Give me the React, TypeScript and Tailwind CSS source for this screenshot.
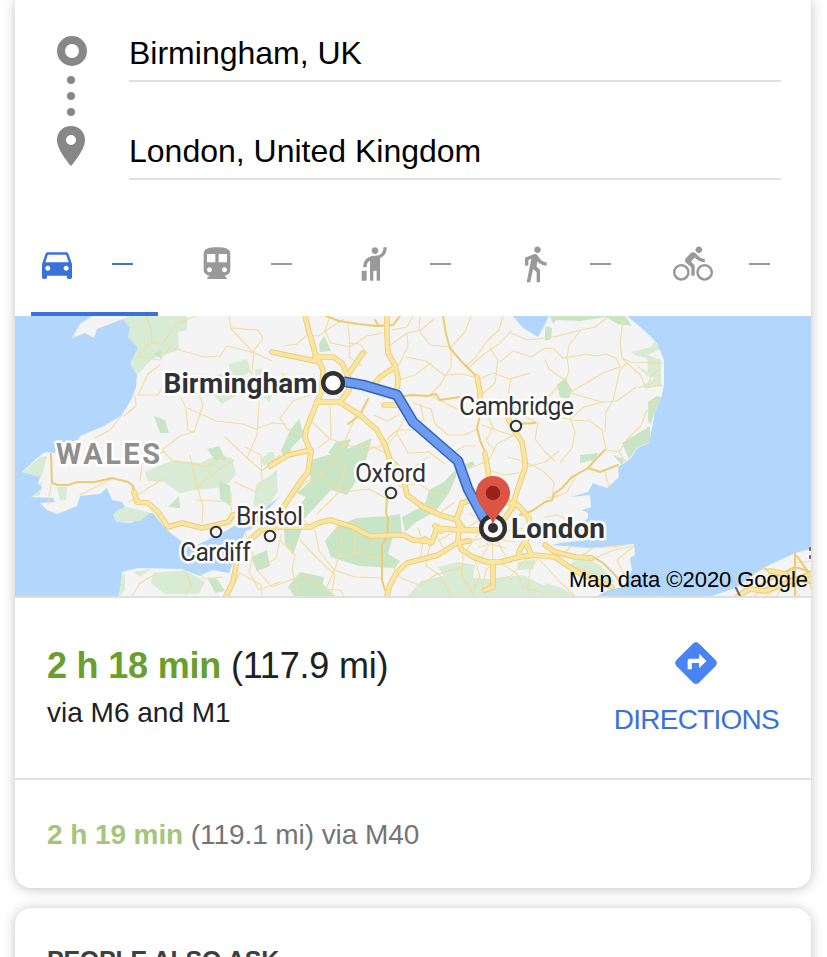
import React from "react";
import {
  MdDirections,
  MdDirectionsBike,
  MdDirectionsCar,
  MdDirectionsSubway,
  MdDirectionsWalk,
  MdHail,
} from "react-icons/md";

const modes = [
  { name: "Drive", Icon: MdDirectionsCar, shift: "" },
  { name: "Transit", Icon: MdDirectionsSubway, shift: "ml-[1px]" },
  { name: "Ride", Icon: MdHail, shift: "" },
  { name: "Walk", Icon: MdDirectionsWalk, shift: "" },
  { name: "Cycle", Icon: MdDirectionsBike, shift: "-ml-[1px]" },
];

// Map geometry, in the map's own coordinate space.
const water = [
  "M15 316H92L89 318L80 324L72 338L85 333L94 338L97 329L123 319L130 328L128 337L138 348L130 364L137 375L136 387L132 398L122 415L104 426L80 436L78 440L58 444L55 453L45 452L37 458L22 472L40 477L38 483L42 488L31 497L53 498L55 502L40 503L47 510L57 514L77 506L80 496L100 494L107 488L112 500L122 502L125 507L113 515L117 522L132 523L142 513L153 513L167 530L182 542L197 545L222 533L250 517L265 508L280 496L266 512L255 527L245 532L236 556L229 573L212 570L200 576L182 569L138 568L122 572L119 596H15Z",
  "M627 316L645 331L657 343L664 360V385L662 395L655 413L649 443L638 448L630 459L633 457L618 467L619 477L607 488L593 483L588 492L571 497L590 495L591 507L582 510L588 513V518L578 527L588 540L560 543L552 545L590 548L634 544L635 555L630 558L632 570L623 587L608 590L598 596H712L735 588L765 567L795 553L811 549V316Z",
  "M513 316L523 328L538 337L543 328L549 316Z",
];

const greens = [
  "M130 316H187V330L178 332L179 350L152 359L140 372L137 375L130 364L138 348L128 337L130 328L123 319Z",
  "M145 472L156 467L175 460L200 463L218 455L232 458L236 474L225 487L195 490L180 493L164 482L148 481Z",
  "M113 515L123 508L150 513L140 521L118 522Z",
  "M41 478L47 456L40 457L23 472Z M31 497L43 480L40 495Z M57 487L67 487L66 500L60 500Z",
  "M153 573L185 570L205 582L199 594L165 594L151 583Z",
  "M119 578L125 573L125 590L120 596Z M133 572L151 569L140 577Z",
  "M216 375L240 372L242 392L222 404L214 396Z M229 364L247 359L251 372L239 377L230 374Z",
  "M255 370L262 368L272 395L270 402L258 393Z",
  "M256 485L277 470L278 491L266 510L253 505Z M261 459L269 452L274 452L275 460L264 466Z",
  "M409 595L421 581L444 576L438 567L458 562L475 565L473 578L490 579L523 575L540 584L560 590L575 596H409Z",
  "M569 565L582 556L600 565L615 582L600 582Z M545 583L562 588L575 596H545Z",
  "M517 562L535 559L533 569L518 570Z",
  "M631 352L651 347L655 341L660 349L648 355L661 360V386L637 388L647 383L655 378L647 376L636 365L648 372L647 358L637 356Z",
];

const parks = [
  "M154 416L165 420L169 433L160 433Z M154 354L161 350L162 359Z M207 449L219 446L226 460L215 460Z",
  "M319 344L324 336L328 344L331 351L320 352Z",
  "M308 461L328 455H364L358 478L347 495L331 490L303 520L295 511L306 497L297 493L311 481Z",
  "M328 453L336 442L351 439L347 449L372 438L366 460L345 462Z",
  "M281 451L290 430L299 419L304 435L293 446L285 460Z",
  "M325 541L337 526L357 518L389 516L394 533L388 554L400 561L395 568L359 566L331 557Z",
  "M389 516L400 514L402 533L391 538Z M402 517L425 505L429 490L444 482L458 467L473 461L475 465L457 474L449 493L435 512L416 522L405 532Z",
  "M288 587L300 572L324 577L323 584L335 596H294Z M251 557L267 550L270 566L257 571Z M207 577L217 579L225 591L215 593Z",
  "M284 530L302 529L293 555L285 543Z M168 507L179 496L180 508Z M219 481L230 486L231 506L220 499Z",
  "M622 443L650 426L650 442L637 448L629 459Z M648 402L657 396L661 397L655 413L650 425L648 420Z M580 455L599 453L594 460L580 463Z M613 455L624 459L622 465Z",
  "M550 316H625L632 326L618 324L606 317L580 321L556 320L553 324Z M557 385L565 378L572 390L569 399L560 397Z M545 326L552 328L551 339L545 341Z",
];

const minorRoads = [
  "M146 316L151 330L152 343L163 343L171 333L176 324L196 316M152 343L137 357L160 360L170 347L186 352L205 357L220 356L227 346L255 353L272 361",
  "M160 365L148 374L138 395L158 395L163 386M181 398L186 408L188 430L193 432M200 397L203 405L194 432M188 408L216 421L243 424L256 429L272 423L285 424",
  "M229 316L231 329L253 352L263 338L258 330L230 328M254 353L251 381L259 402L257 435L247 458M254 378L285 390",
  "M193 432L180 436L162 450L174 462L187 463L207 467L225 456M160 450L152 446M163 452L142 464L140 481M225 437L247 458L262 471L280 455",
  "M122 415L110 430L95 438M135 395L136 406L124 416M51 485L48 505M80 495L98 486L112 479M163 479L142 492L129 502M190 455L194 475L203 507L202 523",
  "M235 482L256 492L262 480L261 455L245 447M231 492L231 512M195 489L218 470L234 460M197 500L232 502",
  "M132 596L140 583L156 574M185 570L191 585L185 596M198 570L204 579L222 577M245 533L253 555L249 572L259 590L280 582M258 570L276 558L281 535",
  "M227 596L240 573L261 585L262 596M257 570L272 587L304 575L322 589L340 590L344 596M280 540L295 555L292 570L299 596M300 540L315 556L335 575L331 596",
  "M315 530L319 551L334 570L355 577L382 578M337 523L342 543L336 566L326 589M354 527L355 552L384 561M383 535L361 552L338 558",
  "M293 498L304 483L320 475L337 456L348 434L355 418M313 465L327 482L345 492L369 489L388 499M281 509L300 516L310 527M317 514L338 493L345 469L327 458",
  "M311 421L330 439L354 447L379 447L397 430L414 430M330 405L331 438L318 448M302 434L287 429L280 418L293 401L313 394",
  "M282 373L301 389L314 389M284 346L297 344L307 335L319 336L330 328L344 319M330 316L325 331L331 343L350 347L367 336L383 333M348 325L350 344L349 357L362 366",
  "M389 346L407 333L421 330L434 319M407 333L408 346L399 365M406 357L426 361L444 375L463 374L474 377M420 316L419 330L430 345L451 347L465 332L471 316",
  "M451 347L451 367L440 385L430 395M399 380L415 375L431 363M467 369L484 354L499 344L511 331M490 348L498 360L495 383L479 397M477 380L493 373L510 379L530 373",
  "M503 316L499 330L487 341L476 357L465 367M511 333L527 340L545 338M500 362L513 351L531 357L545 348M511 379L507 400L520 412L515 421",
  "M397 400L405 418L395 436L384 449M413 403L431 409L435 424L448 435L464 435L478 429M430 396L447 404L465 413L480 412M399 409L417 423M397 433L408 453L429 452L445 464",
  "M387 454L374 447L358 456M392 480L401 487L418 483L431 492L446 496M404 477L416 466L428 457M455 502L440 513L430 505L412 500M457 464L471 468L485 462",
  "M525 417L538 423L535 439L545 452L555 461M516 434L497 444L488 462M488 470L505 475L525 472M508 457L525 462L542 470L554 482L552 500M526 467L545 462L559 451",
  "M482 425L502 432L521 438M439 523L437 537L445 551M418 528L423 541L420 560L407 564M457 530L440 540M430 544L426 566L440 575L451 596M390 562L401 578L421 586L435 575L462 567",
  "M470 513L479 520L470 526M465 538L477 540L492 533L506 541L527 541M478 547L487 545L492 530L493 562M495 534L501 548L508 560M494 532L507 531L523 528M481 558L490 544L505 548",
  "M503 524L510 515L518 506M494 519L500 503L489 498M458 523L474 529L489 529M465 552L478 534L489 532M463 555L462 576L474 596M474 557L480 577L474 588M482 590L486 570L493 563",
  "M495 580L511 576L526 559M500 562L517 574L524 588L545 593M540 556L530 569L528 587M540 560L560 582L575 596M552 553L565 567L584 569L602 582M580 557L593 548L622 546M595 558L614 550L634 546M634 546L617 560L628 582",
  "M545 338L558 336L581 330L595 327L608 317M581 330L569 345L567 357L577 356L585 354L596 356L606 354L616 358L620 367M567 357L569 371L566 379L570 393L602 402L617 401L636 387",
  "M545 348L554 349L563 358L567 357M545 360L549 369L566 381M623 321L620 343L622 358L627 363L620 370L613 400L606 412L605 432M622 358L631 362L663 363M571 392L588 382L603 373L620 367M603 402L584 407L570 419L548 417",
  "M571 420L575 432L572 448L560 463M571 420L590 421L602 430L606 450L619 452L628 438L641 426L646 412L655 402M627 363L641 376L646 388L662 385M619 452L626 462M660 369L651 376L648 386",
  "M605 472L609 487M588 468L576 475L567 492L554 498M545 498L562 495M545 517L557 515L571 521M572 546L560 556",
  "M743 590L751 575L765 568M760 580L774 570L785 577L795 568M766 596L785 584L811 580M777 596L786 579L800 596M795 563L811 561M800 560L808 575L811 590M754 596L770 585",
  "M413 316L407 327L392 330M367 353L360 344L348 343M400 414L387 421L374 415M420 404L424 420L416 425M450 455L464 446L476 446M488 416L493 427L486 441L495 451M526 400L545 400L560 385",
];

const mainRoads = [
  "M443 316L446 334L450 348L461 361L475 375M326 316L339 321L358 324L376 326L387 325M375 320L379 326L393 325L400 316",
  "M397 397L412 395L427 396L436 394L440 400L460 397M480 415L477 428L480 440L485 452M368 399L360 415L348 424",
  "M605 450L597 458L588 468L572 477L562 488L554 494L552 500L545 502L532 511L520 515M588 468L600 472L618 465",
  "M51 454L52 483L58 485L68 485L78 482L95 482L112 478L128 482L133 486L134 492M387 498L386 512L388 520L387 538L382 545V580L385 590",
  "M595 558L603 563L615 575L623 587M516 424L535 423",
  "M795 553V596M740 596L770 580L795 567L811 572M765 569L795 580L811 583M797 556L811 576",
];

const motorways = [
  "M305 316L309 332L313 345L315 353L323 370L322 390L317 402L306 430L305 438L311 452L308 472L300 482L290 497L283 508L276 521L262 530L250 540L238 555L233 582L226 596",
  "M272 352L286 355L315 361M315 357L333 357L342 363L348 377L349 390L340 402M363 353L349 373M317 402L340 402L350 409L360 415L377 430L385 445L390 460L400 469L405 485L407 495L423 507L440 515L457 520L462 527",
  "M387 316V335L388 353L395 365L398 378L397 393M395 367L380 377L372 387M384 405H398M270 466L280 460L288 455L311 450",
  "M477 377L480 392V402M485 454L488 470L490 490M508 418L514 430L522 442L525 460V468L518 488L512 508L500 525",
  "M134 492L137 502L148 503L158 512L168 527L182 523L202 528L228 522L233 515L244 514M250 540L262 529L280 527L310 527L318 523L330 520L353 527L370 536L403 535L413 540L432 542L437 528L458 530L480 530M435 526L441 531M430 543L425 539",
  "M462 503L457 518L459 528L458 542L462 550L473 557L487 562L500 562L520 557L532 555L545 556L555 557L562 562L582 575L612 587M545 545L555 552L575 557L592 558M518 557L520 549L525 542L529 549L531 556M525 542L530 534L529 518L518 505L500 500L480 497L462 503",
  "M469 541L457 543L438 555L407 563L397 572L390 585L387 596M493 563L493 587L485 590M738 596L750 589L765 591L811 574M770 571L786 574",
];

const route = "M346 382L363 385L397 395L413 422L458 461L468 489L487 524";

function Halo({ x, y, width, size, weight, children, fill = "#303134" }: {
  x: number; y: number; width: number; size: number; weight: number; children: string; fill?: string;
}) {
  return (
    <text x={x} y={y} textLength={width} fontSize={size} fontWeight={weight} fill={fill}
      stroke="#fff" strokeWidth="5" strokeLinejoin="round" paintOrder="stroke" className="font-['Roboto',sans-serif]">
      {children}
    </text>
  );
}

function RouteMap() {
  return (
    <svg viewBox="15 316 796 280" className="block h-[280px] w-full" role="img" fill="none" strokeLinecap="round" strokeLinejoin="round">
      <rect x="15" y="316" width="796" height="280" fill="#f4f4f4" />
      {greens.map((d) => <path key={d} d={d} fill="#d7ebd5" />)}
      {parks.map((d) => <path key={d} d={d} fill="#c8e5c5" />)}
      {water.map((d) => <path key={d} d={d} fill="#b3d7fc" />)}
      <path d="M113 515L119 509L128 507L150 513L140 521L118 522Z" fill="#d7ebd5" />
      {minorRoads.map((d) => <path key={d} d={d} stroke="#f4dda0" strokeWidth="1.1" />)}
      {mainRoads.map((d) => <path key={d} d={d} stroke="#edca74" strokeWidth="2" />)}
      {motorways.map((d) => <path key={d} d={d} stroke="#ebcb78" strokeWidth="5.6" />)}
      {motorways.map((d) => <path key={d} d={d} stroke="#fbe6a0" strokeWidth="3.8" />)}
      <path d="M736 588L740 596M810 548V550M810 556V558" stroke="#666" strokeWidth="2" />

      <path d={route} stroke="#2f63c4" strokeWidth="10.8" />
      <path d={route} stroke="#6e9bf0" strokeWidth="7.8" />

      <g stroke="#333" strokeWidth="2" fill="#f4f4f4">
        <circle cx="516" cy="426" r="5.2" />
        <circle cx="391" cy="493" r="5.2" />
        <circle cx="216" cy="532" r="5.2" />
        <circle cx="270" cy="536" r="5.2" />
      </g>
      <circle cx="333" cy="383" r="9.8" fill="#fff" stroke="#303030" strokeWidth="4.4" />
      <circle cx="493" cy="528" r="11.8" fill="#fff" stroke="#303030" strokeWidth="4.4" />
      <circle cx="493" cy="528" r="5" fill="#303030" />
      <path d="M493 524.5C490 514 476 505 476 493A17 17 0 0 1 510 493C510 505 496 514 493 524.5Z" fill="#dc5444" />
      <circle cx="493" cy="493" r="7.2" fill="#98211b" />

      <Halo x={163.5} y={392.5} width={154} size={28} weight={700}>Birmingham</Halo>
      <Halo x={511} y={537.5} width={94} size={28} weight={700}>London</Halo>
      <Halo x={459} y={414.5} width={115} size={25} weight={400}>Cambridge</Halo>
      <Halo x={355} y={481.5} width={71} size={25} weight={400}>Oxford</Halo>
      <Halo x={236} y={524.5} width={67} size={25} weight={400}>Bristol</Halo>
      <Halo x={180} y={560.5} width={71} size={25} weight={400}>Cardiff</Halo>
      <Halo x={56} y={463.5} width={104} size={29} weight={700} fill="#8f8f8f">WALES</Halo>
      <text x="569" y="587" textLength="239" fontSize="22" fill="#000" className="font-['Liberation_Sans',sans-serif]">Map data ©2020 Google</text>
    </svg>
  );
}

export default function App() {
  return (
    <div className="flex h-[957px] w-[827px] flex-col gap-5 overflow-hidden bg-white px-4 pl-[15px] font-['Liberation_Sans',Arial,sans-serif] text-[#202124]">
      <main className="h-[888px] shrink-0 overflow-visible rounded-b-2xl bg-white shadow-[0_1px_12px_rgba(32,33,36,0.28)]">
        <section className="flex h-[222px] pl-[42px]">
          <svg viewBox="57 36 30 130" className="mt-9 h-[130px] w-[30px] shrink-0" fill="#878787">
            <circle cx="72" cy="51" r="11" fill="none" stroke="#878787" strokeWidth="8" />
            <circle cx="71" cy="80" r="4" />
            <circle cx="71" cy="96" r="4" />
            <circle cx="71" cy="112" r="4" />
            <path fillRule="evenodd" d="M71 126C63 126 57 132 57 140C57 150.5 71 166 71 166S85 150.5 85 140C85 132 79 126 71 126ZM71 135A5 5 0 1 1 71 145A5 5 0 0 1 71 135Z" />
          </svg>
          <div className="ml-[42px] w-[652px] text-[32px] leading-9 text-black">
            <div className="h-[82px] border-b-2 border-[#e0e0e0] pt-[35px]">Birmingham, UK</div>
            <div className="h-[98px] border-b-2 border-[#e0e0e0] pt-[51px]">London, United Kingdom</div>
          </div>
        </section>

        <nav className="grid h-[94px] grid-cols-5">
          {modes.map(({ name, Icon, shift }, i) => (
            <button key={name} aria-label={name} className={i === 0 ? "px-4 text-[#3b72d9]" : "px-4 text-[#999]"}>
              <span className={i === 0 ? "flex h-full items-start border-b-4 border-[#3b72d9] pt-[22px] pl-1.5" : "flex h-full items-start border-b-4 border-transparent pt-[22px] pl-1.5"}>
                <span className="flex h-10 w-[75px] items-center"><Icon size={40} className={shift} /></span>
                <span className="mt-[19px] h-[2px] w-[21px] bg-current" />
              </span>
            </button>
          ))}
        </nav>

        <RouteMap />

        <section className="flex h-[184px] justify-between border-y-2 border-[#dfdfdf] pr-[32px] pl-8">
          <div className="pt-[47px]">
            <div className="text-[36px] leading-[42px] tracking-[-0.2px] whitespace-nowrap"><b className="text-[#689f2f]">2 h 18 min</b> (117.9 mi)</div>
            <div className="mt-2.5 text-[28px] leading-8 whitespace-nowrap">via M6 and M1</div>
          </div>
          <button className="flex flex-col items-center pt-10 text-[28px] leading-8 text-[#3b72d9]">
            <MdDirections size={50} className="text-[#4a84f3]" />
            <span className="mt-4 tracking-[-0.75px]">DIRECTIONS</span>
          </button>
        </section>

        <section className="pt-[39px] pl-8 text-[28px] leading-8 tracking-[-0.08px] whitespace-nowrap text-[#757575]">
          <b className="text-[#a4c57b]">2 h 19 min</b> (119.1 mi) via M40
        </section>
      </main>

      <section className="h-[120px] shrink-0 rounded-t-2xl bg-white pt-[37px] pl-8 shadow-[0_1px_12px_rgba(32,33,36,0.28)]">
        <h2 className="text-[25px] leading-[30px] font-bold tracking-[-0.25px] text-[#3c4043]">PEOPLE ALSO ASK</h2>
      </section>
    </div>
  );
}
